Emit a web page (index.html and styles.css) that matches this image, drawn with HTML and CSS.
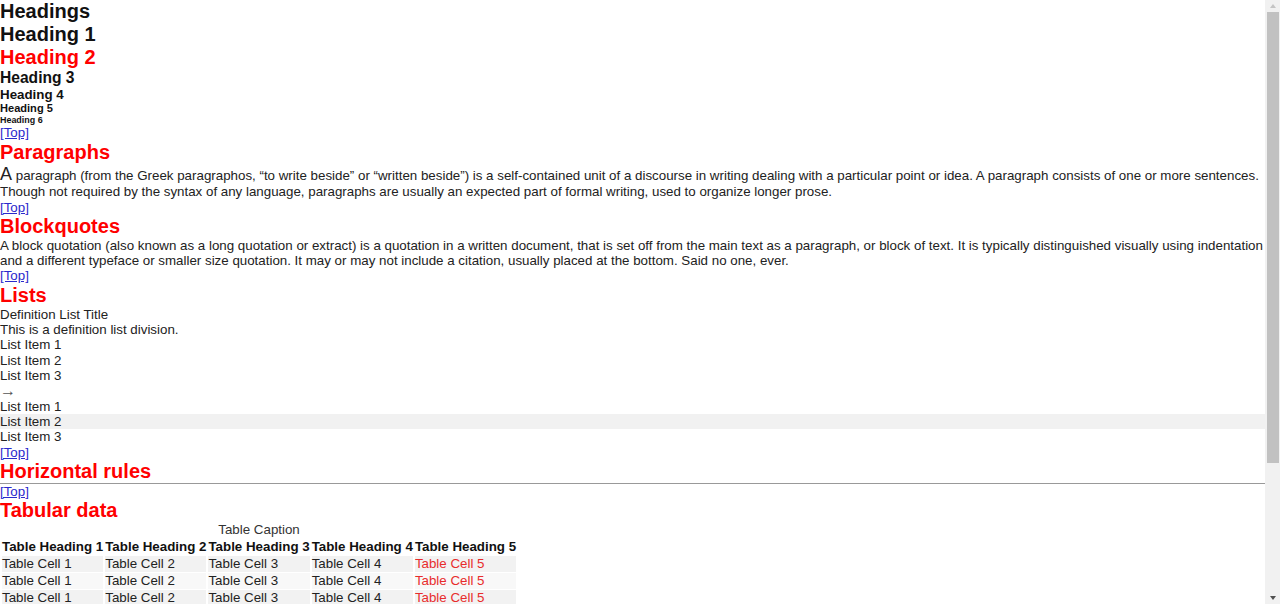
FILE: index.html
```html
<!DOCTYPE html>
<html lang="en">
<head>
<meta charset="utf-8">
<title>Reset test</title>
<link rel="stylesheet" href="styles.css">
</head>
<body>
<section class="sec" id="headings">
  <h1 class="plain">Headings</h1>
  <h1 class="plain">Heading 1</h1>
  <h2>Heading 2</h2>
  <h3>Heading 3</h3>
  <h4>Heading 4</h4>
  <h5>Heading 5</h5>
  <h6>Heading 6</h6>
  <a class="top" href="#headings">[Top]</a>
</section>
<section class="sec" id="paragraphs">
  <h2>Paragraphs</h2>
  <p><span class="big">A</span> paragraph (from the Greek paragraphos, “to write beside” or “written beside”) is a self-contained unit of a discourse in writing dealing with a particular point or idea. A paragraph consists of one or more sentences. Though not required by the syntax of any language, paragraphs are usually an expected part of formal writing, used to organize longer prose.</p>
  <a class="top" href="#headings">[Top]</a>
</section>
<section class="sec" id="blockquotes">
  <h2>Blockquotes</h2>
  <blockquote><p>A block quotation (also known as a long quotation or extract) is a quotation in a written document, that is set off from the main text as a paragraph, or block of text. It is typically distinguished visually using indentation and a different typeface or smaller size quotation. It may or may not include a citation, usually placed at the bottom. Said no one, ever.</p></blockquote>
  <a class="top" href="#headings">[Top]</a>
</section>
<section class="sec" id="lists">
  <h2>Lists</h2>
  <dl>
    <dt>Definition List Title</dt>
    <dd>This is a definition list division.</dd>
  </dl>
  <ol>
    <li>List Item 1</li>
    <li>List Item 2</li>
    <li>List Item 3</li>
  </ol>
  <div class="arrow">→</div>
  <ul>
    <li>List Item 1</li>
    <li class="hl">List Item 2</li>
    <li>List Item 3</li>
  </ul>
  <a class="top" href="#headings">[Top]</a>
</section>
<section class="sec" id="hr">
  <h2>Horizontal rules</h2>
  <hr>
  <a class="top" href="#headings">[Top]</a>
</section>
<section class="sec" id="tables">
  <h2>Tabular data</h2>
  <table>
    <caption>Table Caption</caption>
    <thead>
      <tr><th>Table Heading 1</th><th>Table Heading 2</th><th>Table Heading 3</th><th>Table Heading 4</th><th>Table Heading 5</th></tr>
    </thead>
    <tbody>
      <tr><td>Table Cell 1</td><td>Table Cell 2</td><td>Table Cell 3</td><td>Table Cell 4</td><td class="red">Table Cell 5</td></tr>
      <tr><td>Table Cell 1</td><td>Table Cell 2</td><td>Table Cell 3</td><td>Table Cell 4</td><td class="red">Table Cell 5</td></tr>
      <tr><td>Table Cell 1</td><td>Table Cell 2</td><td>Table Cell 3</td><td>Table Cell 4</td><td class="red">Table Cell 5</td></tr>
      <tr><td>Table Cell 1</td><td>Table Cell 2</td><td>Table Cell 3</td><td>Table Cell 4</td><td class="red">Table Cell 5</td></tr>
    </tbody>
    <tfoot>
      <tr><th>Table Footer 1</th><th>Table Footer 2</th><th>Table Footer 3</th><th>Table Footer 4</th><th>Table Footer 5</th></tr>
    </tfoot>
  </table>
  <a class="top" href="#headings">[Top]</a>
</section>
<section class="sec" id="code">
  <h2>Code</h2>
  <p>Keyboard input: <kbd>Cmd</kbd></p>
  <p>Inline code: <code>&lt;div&gt;code&lt;/div&gt;</code></p>
  <p>Sample output: <samp>This is sample output from a computer program.</samp></p>
  <a class="top" href="#headings">[Top]</a>
</section>
<div class="scrollbar" aria-hidden="true">
  <div class="sb-btn sb-up"></div>
  <div class="sb-track"><div class="sb-thumb"></div></div>
  <div class="sb-btn sb-down"></div>
</div>
</body>
</html>
```
FILE: styles.css
```css
html, body {
  margin: 0;
  padding: 0;
}
body {
  font-family: "Liberation Sans", Arial, sans-serif;
  font-size: 13.333px;
  line-height: 1.15;
  color: #222;
  background: #fff;
  padding-right: 15px;
}
h1, h2, h3, h4, h5, h6, p, blockquote, dl, dd, ol, ul, hr, table, caption {
  margin: 0;
  padding: 0;
}
h1, h2 {
  font-size: 20px;
  font-weight: bold;
}
h1.plain {
  color: #111;
}
h2 {
  color: #f00;
}
h3 { font-size: 15.6px; color: #111; }
h4 { font-size: 13.333px; color: #111; }
h5 { font-size: 11.07px; color: #111; }
h6 { font-size: 8.93px; color: #111; }
.top {
  display: block;
  color: #2a2acc;
  text-decoration: underline;
}
.big {
  font-size: 18px;
}
ol, ul {
  list-style: none;
}
.hl {
  background: #f1f1f1;
}
.arrow {
  color: #555;
  font-size: 16px;
  height: 15.33px;
  line-height: 15.33px;
}
hr {
  border: 0;
  border-top: 1px solid #999;
  height: 0;
}
table {
  border-collapse: separate;
  border-spacing: 2px 1px;
}
caption {
  text-align: center;
  color: #333;
}
th, td {
  padding: 0.35px 0;
  text-align: left;
}
th {
  font-weight: bold;
  color: #111;
}
tbody tr:nth-child(odd) td {
  background: #f2f2f2;
}
tbody tr:nth-child(even) td {
  background: #f8f8f8;
}
td.red {
  color: #e82c2c;
}
code, kbd, samp {
  font-family: "Liberation Mono", monospace;
}

/* decorative classic scrollbar overlay */
.scrollbar {
  position: fixed;
  top: 0;
  right: 0;
  width: 15px;
  height: 100vh;
  background: #f1f1f1;
  display: flex;
  flex-direction: column;
}
.sb-btn {
  height: 12px;
  flex: none;
  display: flex;
  align-items: center;
  justify-content: center;
}
.sb-btn::before {
  content: "";
  width: 0;
  height: 0;
  border-left: 3.5px solid transparent;
  border-right: 3.5px solid transparent;
}
.sb-up::before {
  border-bottom: 4px solid #c4c4c4;
}
.sb-down::before {
  border-top: 4px solid #505050;
}
.sb-track {
  flex: 1;
}
.sb-thumb {
  height: 451px;
  margin: 0 1px 0 2px;
  background: #c1c1c1;
}
```
